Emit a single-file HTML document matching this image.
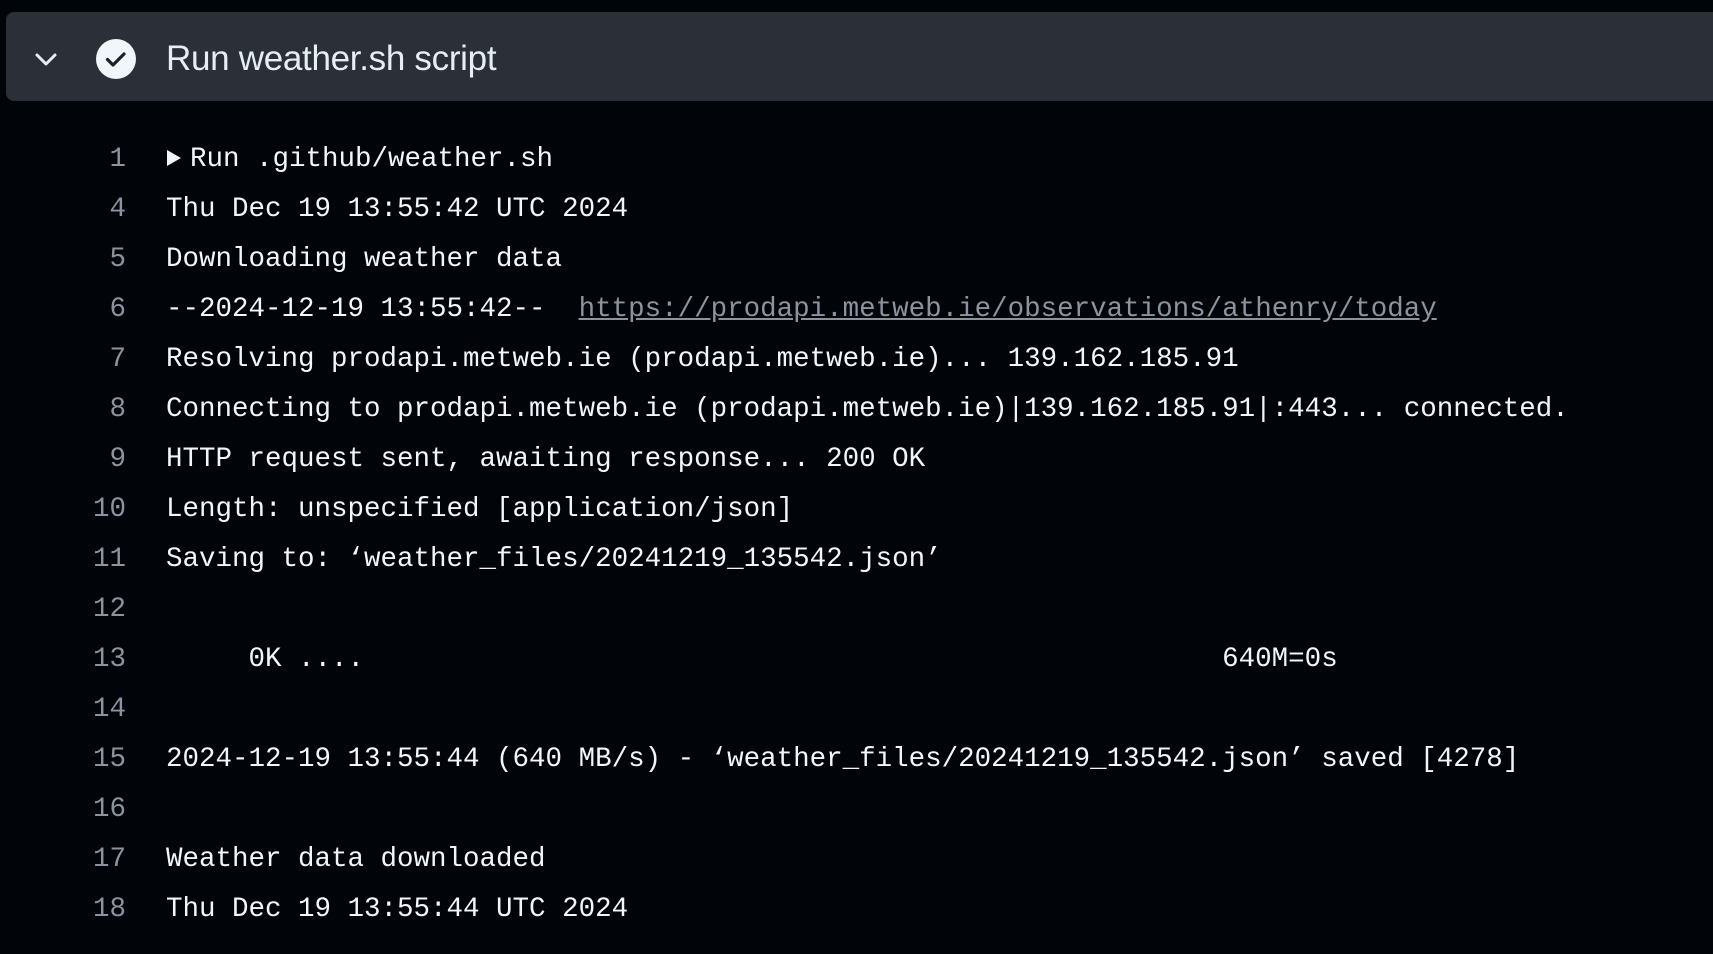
<!DOCTYPE html>
<html><head><meta charset="utf-8"><style>
html,body{margin:0;padding:0;background:#010409;width:1713px;height:954px;overflow:hidden}
.hdr{position:absolute;left:6px;top:12px;width:1720px;height:89px;background:#2b3038;border-radius:8px}
.title{position:absolute;left:166px;top:39px;font-family:"Liberation Sans",sans-serif;font-size:35px;color:#e6edf3;line-height:40px;letter-spacing:-0.3px}
.log{position:absolute;left:0;top:135px;font-family:"Liberation Mono",monospace;font-size:27.5px;color:#f0f6fc}
.ln{height:50px;line-height:50px;white-space:pre;position:relative}
.n{position:absolute;left:60px;width:66px;text-align:right;color:#8b949e}
.t{position:absolute;left:166px}
a{color:#8b949e;text-decoration:underline}
</style></head><body>
<div class="hdr"></div>
<svg style="position:absolute;left:34px;top:50px" width="24" height="20" viewBox="0 0 24 20"><path d="M3 5 L12 14 L21 5" fill="none" stroke="#e6edf3" stroke-width="3" stroke-linecap="round" stroke-linejoin="round"/></svg>
<svg style="position:absolute;left:95px;top:38px" width="42" height="42" viewBox="0 0 42 42"><circle cx="21" cy="21" r="20" fill="#f0f6fc"/><path d="M12.5 21.5 L18 27 L29 16" fill="none" stroke="#1c2128" stroke-width="3.2" stroke-linecap="round" stroke-linejoin="round"/></svg>
<div class="title">Run weather.sh script</div>
<div class="log">
<div class="ln"><span class="n">1</span><span class="t"><svg width="16" height="18" viewBox="0 0 16 18" style="margin-right:8px;vertical-align:-1px"><path d="M1 1 L15 9 L1 17 Z" fill="#f0f6fc"/></svg>Run .github/weather.sh</span></div>
<div class="ln"><span class="n">4</span><span class="t">Thu Dec 19 13:55:42 UTC 2024</span></div>
<div class="ln"><span class="n">5</span><span class="t">Downloading weather data</span></div>
<div class="ln"><span class="n">6</span><span class="t">--2024-12-19 13:55:42--  <a>https://prodapi.metweb.ie/observations/athenry/today</a></span></div>
<div class="ln"><span class="n">7</span><span class="t">Resolving prodapi.metweb.ie (prodapi.metweb.ie)... 139.162.185.91</span></div>
<div class="ln"><span class="n">8</span><span class="t">Connecting to prodapi.metweb.ie (prodapi.metweb.ie)|139.162.185.91|:443... connected.</span></div>
<div class="ln"><span class="n">9</span><span class="t">HTTP request sent, awaiting response... 200 OK</span></div>
<div class="ln"><span class="n">10</span><span class="t">Length: unspecified [application/json]</span></div>
<div class="ln"><span class="n">11</span><span class="t">Saving to: ‘weather_files/20241219_135542.json’</span></div>
<div class="ln"><span class="n">12</span><span class="t"></span></div>
<div class="ln"><span class="n">13</span><span class="t">     0K ....                                                    640M=0s</span></div>
<div class="ln"><span class="n">14</span><span class="t"></span></div>
<div class="ln"><span class="n">15</span><span class="t">2024-12-19 13:55:44 (640 MB/s) - ‘weather_files/20241219_135542.json’ saved [4278]</span></div>
<div class="ln"><span class="n">16</span><span class="t"></span></div>
<div class="ln"><span class="n">17</span><span class="t">Weather data downloaded</span></div>
<div class="ln"><span class="n">18</span><span class="t">Thu Dec 19 13:55:44 UTC 2024</span></div>
</div>
</body></html>
